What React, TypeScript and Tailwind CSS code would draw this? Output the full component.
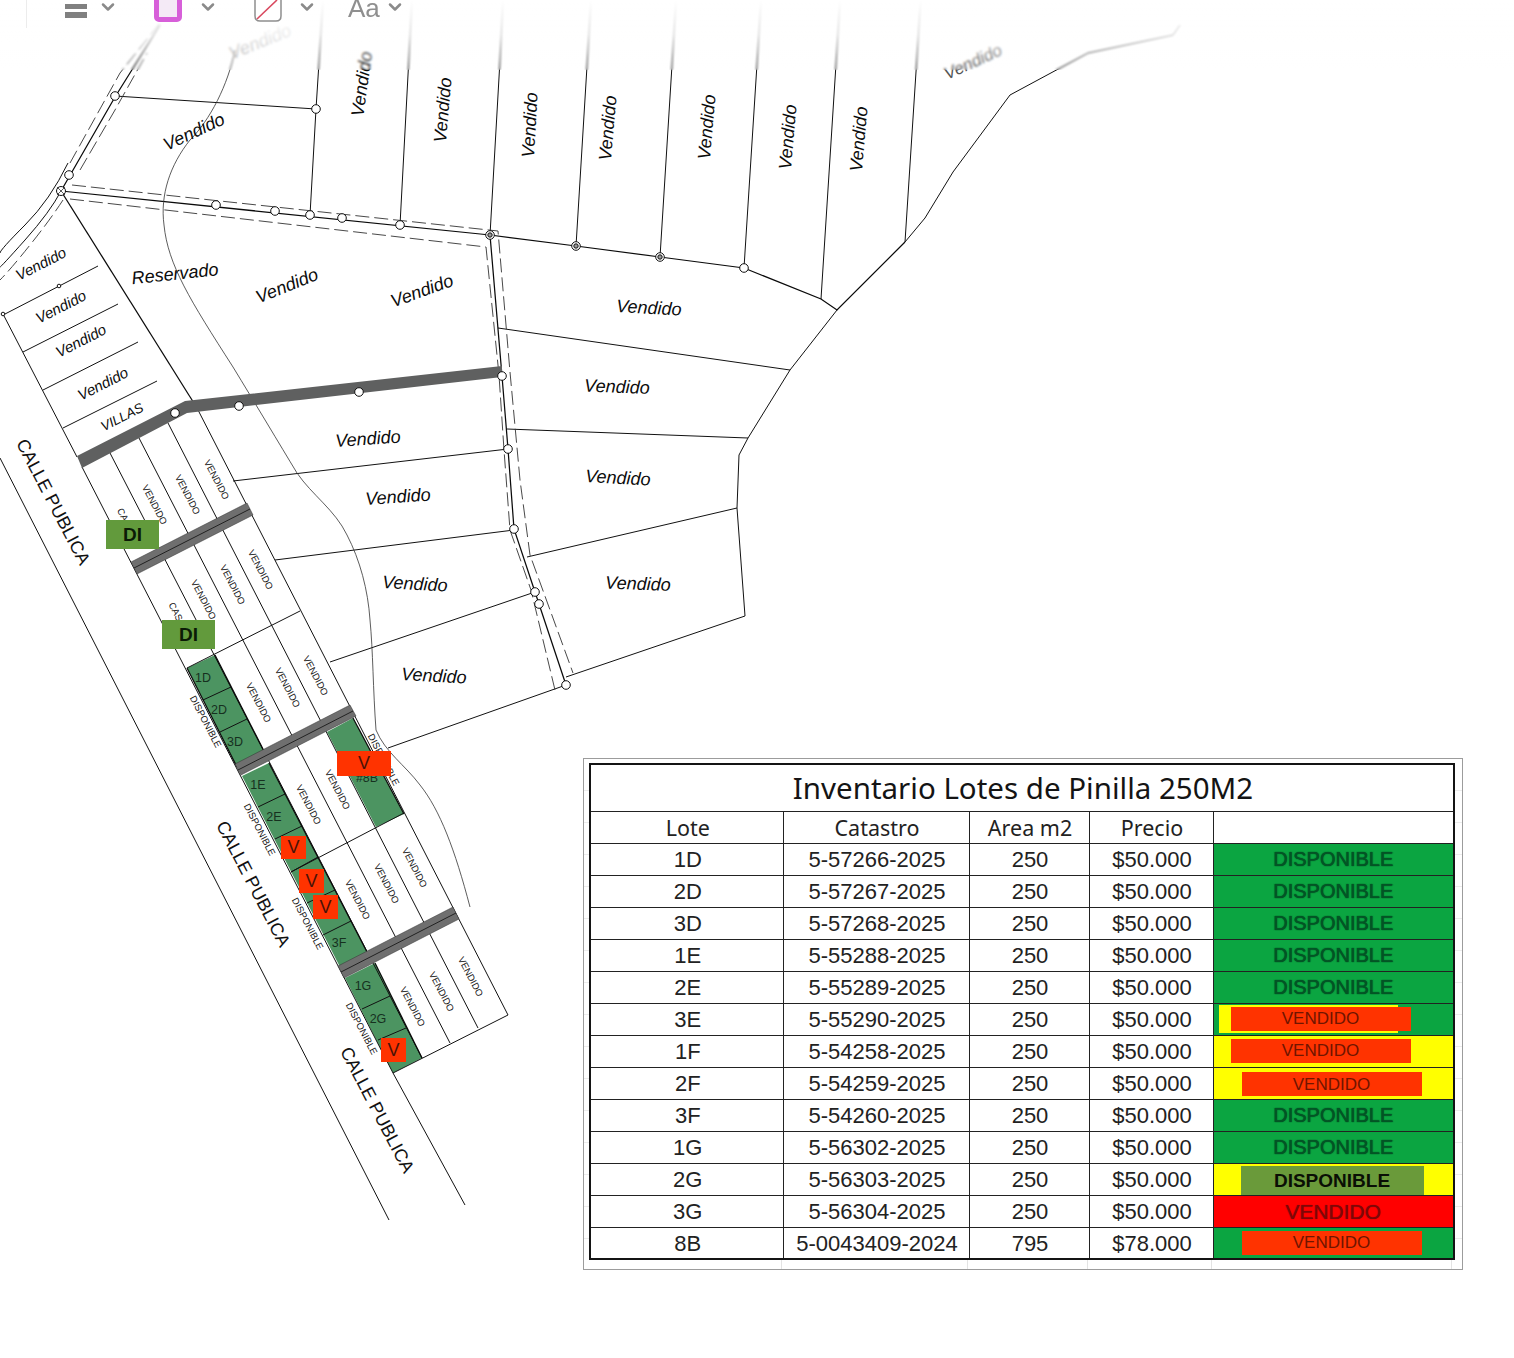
import { ChevronDown } from "lucide-react";

type Label = [number, number, number, string?];

const mainLines = [
  "M61 191 115 97 160 25",
  "M61 191 490 235 576 246 660 257 744 268 821 299 837 310 905 242",
  "M490 235 502 376 508 449 514 529 535 592 566 685",
  "M61 191 197 408",
  "M187 668 237 767",
  "M215 655 265 753",
  "M269 763 367 952",
  "M375 963 422 1058",
  "M353 718 404 814",
];

const thinLines = [
  "M310 215 316 109 323 0",
  "M400 225 412 0",
  "M490 235 500 60 503 0",
  "M576 246 590 17 591 0",
  "M660 257 675 17 676 0",
  "M744 268 760 17 761 0",
  "M821 299 839 17 840 0",
  "M905 242 920 10 921 0",
  "M115 96 316 109",
  "M905 242 925 218 953 172 1010 95 1088 53 1173 35 1180 25",
  "M498 328 790 370",
  "M507 429 748 438",
  "M527 557 737 508",
  "M566 677 745 616 737 508 739 455 748 438 790 370 837 310",
  "M233 481 508 449",
  "M275 560 514 530",
  "M330 662 535 592",
  "M388 748 566 685",
  "M61 191Q50 212 25 240T0 267",
  "M68 163Q50 200 25 225T0 253",
  "M3 314 77 457",
  "M98 266 5 314",
  "M118 304 23 352",
  "M138 342 43 390",
  "M157 381 63 428",
  "M82 467 393 1073 465 1205",
  "M110 453 422 1058",
  "M139 438 450 1043",
  "M168 423 478 1028",
  "M197 408 508 1015",
  "M187 668 300 611",
  "M291 872 404 813",
  "M393 1073 508 1015",
  "M0 458 389 1220",
];

const terrainCurve =
  "M235 50C228 85 210 120 190 140C170 165 160 195 164 225C168 265 190 300 233 367C255 403 280 445 297 473C312 495 335 510 347 535C360 560 368 590 370 620C373 650 373 690 376 730C385 752 405 765 420 785C440 810 455 850 470 907";

const dashed = [
  "M72 185 498 231 510 372 520 480 530 555 573 673",
  "M70 199 486 247 499 375 504 450 510 530 531 590 555 690",
  "M70 163 120 73 160 23",
  "M80 170 115 110 147 53",
  "M63 200Q50 220 30 245T0 280",
];

const greenBlocks = [
  "187,668 215,655 265,753 237,767",
  "242,776 269,763 367,952 340,967",
  "345,978 375,963 422,1058 393,1073",
  "327,732 353,718 404,814 376,827",
];

const greenCross = [
  "M203 700 231 687",
  "M220 732 247 719",
  "M258 807 285 794",
  "M275 839 302 826",
  "M291 872 318 857",
  "M307 903 335 890",
  "M323 935 351 921",
  "M362 1009 390 996",
  "M378 1040 406 1028",
];

const bands = [
  ["131,562 247,503 253,515 137,574", "M134 568 250 509"],
  ["235,764 350,705 356,716 241,775", "M238 770 353 711"],
  ["338,966 453,907 459,919 344,978", "M341 972 456 913"],
];

const circles = [
  [115, 96],
  [316, 109],
  [69, 175],
  [216, 205],
  [275, 211],
  [310, 215],
  [342, 218],
  [400, 225],
  [744, 268],
  [239, 406],
  [359, 392],
  [175, 413],
  [502, 376],
  [508, 449],
  [514, 529],
  [535, 592],
  [539, 604],
  [566, 685],
];

const bigLabels: Label[] = [
  [194, 132, -25, "Vendido"],
  [362, 84, -82, "Vendido"],
  [443, 110, -85, "Vendido"],
  [530, 125, -87, "Vendido"],
  [608, 128, -85, "Vendido"],
  [707, 127, -85, "Vendido"],
  [788, 137, -85, "Vendido"],
  [859, 139, -85, "Vendido"],
  [175, 274, -6, "Reservado"],
  [287, 286, -22, "Vendido"],
  [422, 291, -20, "Vendido"],
  [649, 308, 3, "Vendido"],
  [617, 387, 2, "Vendido"],
  [618, 478, 3, "Vendido"],
  [638, 584, 2, "Vendido"],
  [368, 439, -4, "Vendido"],
  [398, 497, -4, "Vendido"],
  [415, 584, 3, "Vendido"],
  [434, 676, 3, "Vendido"],
];

const stripLabels: Label[] = [
  [41, 264, -27, "Vendido"],
  [61, 307, -27, "Vendido"],
  [81, 341, -27, "Vendido"],
  [103, 384, -27, "Vendido"],
];

const vendidoSmall = [
  [154, 505],
  [187, 495],
  [216, 480],
  [260, 570],
  [232, 585],
  [203, 600],
  [315, 676],
  [287, 688],
  [258, 703],
  [308, 805],
  [337, 790],
  [414, 868],
  [386, 884],
  [357, 900],
  [470, 977],
  [441, 992],
  [412, 1007],
];

const disponibleSmall = [
  [205, 722],
  [259, 830],
  [307, 924],
  [361, 1029],
  [383, 760],
];

const lotNames: Label[] = [
  [203, 678, 0, "1D"],
  [219, 710, 0, "2D"],
  [235, 742, 0, "3D"],
  [258, 785, 0, "1E"],
  [274, 817, 0, "2E"],
  [339, 943, 0, "3F"],
  [363, 986, 0, "1G"],
  [378, 1019, 0, "2G"],
  [367, 778, 0, "#8B"],
];

const vBoxes = [
  [337, 751, 54, 25],
  [281, 836, 25, 23],
  [299, 869, 25, 24],
  [313, 895, 25, 24],
  [381, 1038, 25, 24],
];

const diBoxes = [
  [106, 520],
  [162, 620],
];

function PlotText({ items, size, className }: { items: Label[]; size: number; className?: string }) {
  return (
    <>
      {items.map(([x, y, angle, text], i) => (
        <text
          key={i}
          x={x}
          y={y}
          dy="1"
          fontSize={size}
          textAnchor="middle"
          dominantBaseline="middle"
          transform={`rotate(${angle} ${x} ${y})`}
          className={className}
        >
          {text}
        </text>
      ))}
    </>
  );
}

function SitePlan() {
  return (
    <svg
      width="1514"
      height="1358"
      viewBox="0 0 1514 1358"
      className="absolute left-0 top-0 font-['Liberation_Sans',Arial,sans-serif]"
    >
      {greenBlocks.map((p) => (
        <polygon key={p} points={p} fill="#4c9461" />
      ))}
      <g fill="none" stroke="#111" strokeWidth="1">
        {thinLines.map((d) => (
          <path key={d} d={d} />
        ))}
        {greenCross.map((d) => (
          <path key={d} d={d} />
        ))}
      </g>
      <g fill="none" stroke="#0a0a0a" strokeWidth="1.25">
        {mainLines.map((d) => (
          <path key={d} d={d} />
        ))}
      </g>
      <path d={terrainCurve} fill="none" stroke="#333" strokeWidth="0.8" />
      <g fill="none" stroke="#333" strokeWidth="0.9" strokeDasharray="14 5">
        {dashed.map((d) => (
          <path key={d} d={d} />
        ))}
      </g>
      <polygon points="77,456 185,401 502,366 502,377 187,413 82,468" fill="#5f6060" />
      {bands.map(([p, d]) => (
        <g key={p}>
          <polygon points={p} fill="#6f6f6f" stroke="#333" strokeWidth="0.5" />
          <path d={d} stroke="#222" strokeWidth="1" />
        </g>
      ))}
      <g fill="#fff" stroke="#111" strokeWidth="1">
        {circles.map(([x, y]) => (
          <circle key={`${x}-${y}`} cx={x} cy={y} r="4.3" />
        ))}
        <circle cx="59" cy="286" r="1.8" />
        <circle cx="3" cy="314" r="1.8" />
        <circle cx="61" cy="191" r="4.5" />
        <path d="M57 187 65 195M65 187 57 195" strokeWidth="0.7" />
        {[
          [490, 235],
          [576, 246],
          [660, 257],
        ].map(([x, y]) => (
          <g key={x}>
            <circle cx={x} cy={y} r="4.3" />
            <circle cx={x} cy={y} r="2.2" fill="#999" />
          </g>
        ))}
      </g>
      <g fill="#0c0c0c" fontStyle="italic">
        <PlotText items={bigLabels} size={18} />
        <PlotText items={stripLabels} size={15} />
        <PlotText items={[[122, 417, -27, "VILLAS"]]} size={13.5} />
        <PlotText items={[[260, 42, -22, "Vendido"]]} size={18} className="fill-[#aaa]" />
        <PlotText items={[[973, 62, -25, "Vendido"]]} size={17} className="fill-[#555]" />
      </g>
      <g fill="#111">
        {vendidoSmall.map(([x, y], i) => (
          <text key={i} x={x} y={y} fontSize="9.5" textAnchor="middle" dominantBaseline="middle" transform={`rotate(62.5 ${x} ${y})`}>
            VENDIDO
          </text>
        ))}
        {disponibleSmall.map(([x, y], i) => (
          <text key={i} x={x} y={y} fontSize="9.5" textAnchor="middle" dominantBaseline="middle" transform={`rotate(62.5 ${x} ${y})`}>
            DISPONIBLE
          </text>
        ))}
        <text x="122" y="515" fontSize="9.5" textAnchor="middle" dominantBaseline="middle" transform="rotate(62.5 122 515)">CA</text>
        <text x="175" y="612" fontSize="9.5" textAnchor="middle" dominantBaseline="middle" transform="rotate(62.5 175 612)">CAS</text>
        <PlotText items={lotNames} size={12.5} className="fill-[#16301f]" />
        <PlotText
          items={[
            [53, 502, 62.5, "CALLE PUBLICA"],
            [253, 884, 62.5, "CALLE PUBLICA"],
            [377, 1110, 62.5, "CALLE PUBLICA"],
          ]}
          size={18}
        />
      </g>
      {vBoxes.map(([x, y, w, h]) => (
        <g key={x}>
          <rect x={x} y={y} width={w} height={h} fill="#ff3300" />
          <text x={x + w / 2} y={y + h / 2 + 1} fontSize="18" textAnchor="middle" dominantBaseline="middle" fill="#4a1208">
            V
          </text>
        </g>
      ))}
      {diBoxes.map(([x, y]) => (
        <g key={x}>
          <rect x={x} y={y} width="53" height="29" fill="#629a3c" />
          <text x={x + 26.5} y={y + 15.5} fontSize="19" fontWeight="700" textAnchor="middle" dominantBaseline="middle" fill="#0b1a06">
            DI
          </text>
        </g>
      ))}
    </svg>
  );
}

function Toolbar() {
  return (
    <div className="absolute left-0 top-0 h-[70px] w-full">
      <div className="h-[70px] w-full bg-gradient-to-b from-white via-white/75 to-transparent backdrop-blur-[1px]" />
      <div className="absolute left-[26px] top-0 h-[28px] w-px bg-[#ececec]" />
      <div className="absolute left-[65px] top-0 flex h-[22px] items-start font-['Liberation_Sans',Arial,sans-serif]">
        <div className="flex w-[89px] items-start">
          <div className="flex w-[33px] flex-col gap-[3px] pt-[4px]">
            <span className="h-[5px] w-[22px] bg-[#808080]" />
            <span className="h-[6px] w-[22px] bg-[#808080]" />
          </div>
          <ChevronDown size={20} strokeWidth={3} className="mt-[-3px] text-[#8a8a8a]" />
        </div>
        <div className="flex w-[100px] items-start">
          <div className="mt-[-5px] flex h-[27px] w-[28px] items-center justify-center rounded-[5px] border-[5px] border-[#d75fd9] bg-[#f4eaf6]" />
          <ChevronDown size={20} strokeWidth={3} className="ml-[16px] mt-[-3px] text-[#8a8a8a]" />
        </div>
        <div className="flex w-[94px] items-start">
          <svg width="28" height="22" viewBox="0 0 28 22" className="block">
            <path d="M1 0V16Q1 21 6 21H22Q27 21 27 16V0" fill="#fff" stroke="#8f8f8f" strokeWidth="1.5" />
            <path d="M3 19 23 0" stroke="#d9495f" strokeWidth="1.6" />
          </svg>
          <ChevronDown size={20} strokeWidth={3} className="ml-[15px] mt-[-3px] text-[#8a8a8a]" />
        </div>
        <div className="flex items-start">
          <span className="mt-[-2px] text-[26px] leading-[20px] text-[#8f8f8f]">Aa</span>
          <ChevronDown size={20} strokeWidth={3} className="ml-[5px] mt-[-3px] text-[#8a8a8a]" />
        </div>
      </div>
    </div>
  );
}

const rows = [
  ["1D", "5-57266-2025", "250", "$50.000", "ok"],
  ["2D", "5-57267-2025", "250", "$50.000", "ok"],
  ["3D", "5-57268-2025", "250", "$50.000", "ok"],
  ["1E", "5-55288-2025", "250", "$50.000", "ok"],
  ["2E", "5-55289-2025", "250", "$50.000", "ok"],
  ["3E", "5-55290-2025", "250", "$50.000", "3e"],
  ["1F", "5-54258-2025", "250", "$50.000", "1f"],
  ["2F", "5-54259-2025", "250", "$50.000", "2f"],
  ["3F", "5-54260-2025", "250", "$50.000", "ok"],
  ["1G", "5-56302-2025", "250", "$50.000", "ok"],
  ["2G", "5-56303-2025", "250", "$50.000", "2g"],
  ["3G", "5-56304-2025", "250", "$50.000", "3g"],
  ["8B", "5-0043409-2024", "795", "$78.000", "8b"],
];

function VendidoChip({ className }: { className: string }) {
  return (
    <span className={`flex h-[24px] w-[180px] items-center justify-center bg-[#ff3300] text-[17px] leading-none text-[#701500] ${className}`}>
      VENDIDO
    </span>
  );
}

function StatusCell({ kind }: { kind: string }) {
  if (kind === "3e") {
    return (
      <div className="relative flex h-full items-center bg-[#0ba541]">
        <span className="ml-[5px] h-[28px] w-[179px] bg-[#ffff00]" />
        <VendidoChip className="absolute left-[17px] top-[3px]" />
      </div>
    );
  }
  if (kind === "1f") {
    return (
      <div className="flex h-full items-center bg-[#ffff00] pb-[1px] pl-[17px]">
        <VendidoChip className="" />
      </div>
    );
  }
  if (kind === "2f") {
    return (
      <div className="flex h-full items-center bg-[#ffff00] pl-[28px] pt-[2px]">
        <VendidoChip className="" />
      </div>
    );
  }
  if (kind === "8b") {
    return (
      <div className="flex h-full items-center bg-[#0ba541] pl-[28px]">
        <VendidoChip className="" />
      </div>
    );
  }
  if (kind === "2g") {
    return (
      <div className="flex h-full items-center bg-[#ffff00] pl-[27px] pt-[2px]">
        <span className="flex h-[29px] w-[183px] items-center justify-center bg-[#6a9a3a] text-[19px] font-bold leading-none text-[#0a0f05]">
          DISPONIBLE
        </span>
      </div>
    );
  }
  if (kind === "3g") {
    return (
      <div className="flex h-full items-center justify-center bg-[#ff0000] text-[21px] leading-none text-[#7d0707] [text-shadow:0_0_1px_#7d0707]">
        VENDIDO
      </div>
    );
  }
  return (
    <div className="flex h-full items-center justify-center bg-[#0ba541] text-[20px] leading-none text-[#035425] [text-shadow:0_0_1px_#035425,0_0_1px_#035425]">
      DISPONIBLE
    </div>
  );
}

function Inventory() {
  return (
    <div className="relative ml-[583px] mt-[758px] w-[880px] border border-[#9c9c9c] bg-[repeating-linear-gradient(to_bottom,transparent_0,transparent_31px,#ececec_31px,#ececec_32px)] pl-[5px] pr-[9px] pt-[4px] font-['Liberation_Sans',Arial,sans-serif]">
      <table className="w-[864px] table-fixed border-collapse border-2 border-[#141414] bg-white text-center text-[22px] text-[#222]">
        <colgroup>
          <col className="w-[193px]" />
          <col className="w-[186px]" />
          <col className="w-[120px]" />
          <col className="w-[124px]" />
          <col className="w-[241px]" />
        </colgroup>
        <tbody>
          <tr className="h-[47px]">
            <td colSpan={5} className="border border-[#222] p-0 pl-[2px] font-['Noto_Sans',sans-serif] text-[29.5px] leading-none text-[#141414]">
              Inventario Lotes de Pinilla 250M2
            </td>
          </tr>
          <tr className="h-[32px] font-['Noto_Sans',sans-serif] text-[21.5px]">
            <td className="border border-[#222] p-0 pl-[2px] pt-[2px] leading-none">Lote</td>
            <td className="border border-[#222] p-0 pl-[2px] pt-[2px] leading-none">Catastro</td>
            <td className="border border-[#222] p-0 pl-[2px] pt-[2px] leading-none">Area m2</td>
            <td className="border border-[#222] p-0 pl-[2px] pt-[2px] leading-none">Precio</td>
            <td className="border border-[#222] p-0 leading-none"></td>
          </tr>
          {rows.map(([lote, catastro, area, precio, kind]) => (
            <tr key={lote} className="h-[32px]">
              <td className="border border-[#222] p-0 pl-[2px] pt-[2px] leading-none">{lote}</td>
              <td className="border border-[#222] p-0 pl-[2px] pt-[2px] leading-none">{catastro}</td>
              <td className="border border-[#222] p-0 pl-[2px] pt-[2px] leading-none">{area}</td>
              <td className="border border-[#222] p-0 pl-[2px] pt-[2px] leading-none">{precio}</td>
              <td className="h-[32px] border border-[#222] p-0">
                <StatusCell kind={kind} />
              </td>
            </tr>
          ))}
        </tbody>
      </table>
      <div className="flex h-[9px]">
        <span className="w-[193px] border-r border-[#e4e4e4]" />
        <span className="w-[186px] border-r border-[#e4e4e4]" />
        <span className="w-[120px] border-r border-[#e4e4e4]" />
        <span className="w-[124px] border-r border-[#e4e4e4]" />
        <span className="w-[240px] border-r border-[#e4e4e4]" />
      </div>
    </div>
  );
}

export default function App() {
  return (
    <div className="relative h-[1358px] w-[1514px] overflow-hidden bg-white">
      <SitePlan />
      <Toolbar />
      <div className="flow-root">
        <Inventory />
      </div>
    </div>
  );
}
